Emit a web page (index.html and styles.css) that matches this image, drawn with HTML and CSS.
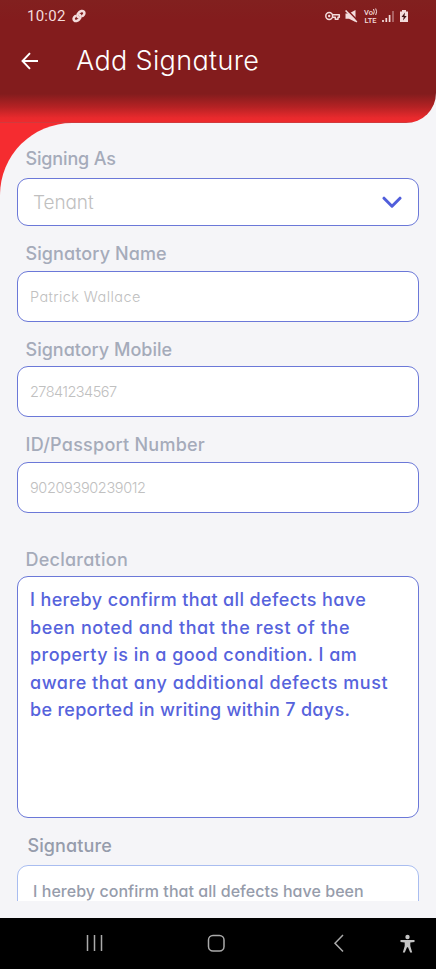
FILE: index.html
```html
<!DOCTYPE html>
<html lang="en">
<head>
<meta charset="utf-8">
<title>Add Signature</title>
<link rel="stylesheet" href="styles.css">
</head>
<body>
<div class="screen">
  <header class="header">
    <div class="status">
      <span class="clock">10:02</span>
      <svg class="link" width="14" height="14" viewBox="0 0 14 14"><g fill="none" stroke="#f3dcdc" stroke-width="2.5" stroke-linecap="round"><path d="M6.2 8.2C4.700 6.700 5.300 5.200 6.800 3.600C8.300 1.800 10.600 1.400 11.800 2.700C13 4 12.200 6 10.700 6.900"/><path d="M7.800 5.800C9.300 7.300 8.700 8.800 7.200 10.400C5.700 12.200 3.400 12.600 2.200 11.300C1 10 1.800 8 3.300 7.100"/></g></svg>
      <svg class="tray" width="86" height="18" viewBox="0 -1 86 18">
        <g fill="none" stroke="#f3dcdc" stroke-width="1.500"><circle cx="5.200" cy="8" r="3.400"/><path d="M8.500 6.700H15.300V9.300H14V11.300H11.300V9.300H8.500" stroke-linejoin="round"/></g><circle cx="5.200" cy="8" r="1.200" fill="#f3dcdc"/>
        <path d="M21.500 5.500H25L31.500 2V14L25 10.800H21.500Z" fill="#f3dcdc"/><path d="M22.800 1.600L34 13" stroke="#831c1d" stroke-width="1.600"/><path d="M21.600 2.500L32.800 14" stroke="#f3dcdc" stroke-width="1.600"/>
        <text x="40" y="6.500" class="tiny" textLength="9" lengthAdjust="spacingAndGlyphs">Vo</text><text x="40.500" y="15" class="tiny" textLength="12" lengthAdjust="spacingAndGlyphs">LTE</text>
        <path d="M49.500 1Q51 3.700 49.500 6.500M51.700 0.500Q53.500 3.700 51.700 7" fill="none" stroke="#f3dcdc"/>
        <path d="M59 12V14M62.300 10V14M65.600 7V14" stroke="#f3dcdc" stroke-width="1.700"/><path d="M69 3V14" stroke="#b9797a" stroke-width="1.500"/>
        <path d="M78 2H82V3.500H84V14H76V3.500H78Z" fill="#f3dcdc"/><path d="M81 4.500L77.500 9H79.700L79 12.500L82.700 8H80.500Z" fill="#401314"/>
      </svg>
    </div>
    <div class="titlebar">
      <svg width="18" height="18" viewBox="0 0 18 18" fill="none" stroke="#fff" stroke-width="1.900"><path d="M17 9H1.500M9 1.200L1.500 9L9 16.800"/></svg>
      <h1>Add Signature</h1>
    </div>
  </header>
  <div class="sheet-back">
    <main class="sheet">
      <div class="label as-label">Signing As</div>
      <div class="field select"><span>Tenant</span><svg width="20" height="13" viewBox="0 0 20 13" fill="none" stroke="#505edb" stroke-width="3" stroke-linecap="round" stroke-linejoin="round"><path d="M2 2.200L10 10.200L18 2.200"/></svg></div>
      <div class="label name-label">Signatory Name</div>
      <div class="field name">Patrick Wallace</div>
      <div class="label">Signatory Mobile</div>
      <div class="field mobile">27841234567</div>
      <div class="label id-label">ID/Passport Number</div>
      <div class="field id-number">90209390239012</div>
      <div class="label decl-label">Declaration</div>
      <div class="area">
        <div class="line-1">I hereby confirm that all defects have</div>
        <div class="line-2">been noted and that the rest of the</div>
        <div class="line-3">property is in a good condition. I am</div>
        <div class="line-4">aware that any additional defects must</div>
        <div class="line-5">be reported in writing within 7 days.</div>
      </div>
      <div class="label sig-label">Signature</div>
      <div class="clip"><div class="sig">I hereby confirm that all defects have been</div></div>
    </main>
  </div>
  <nav class="nav">
    <svg width="436" height="51" viewBox="0 0 436 51" fill="none" stroke="#aaa" stroke-width="1.500">
      <path d="M87.500 17V33M94.500 17V33M101.500 17V33"/><rect x="208.500" y="17.500" width="15.500" height="15.500" rx="4.500"/><path d="M343 17L335 25.200L343 33.500"/>
      <g fill="#c4c4c4" stroke="none"><circle cx="407.500" cy="19" r="2.200"/><path d="M400.500 22H414.500V23.900L410.300 24.500V28L412.200 34.500H410.200L408 29.300H407L404.800 34.500H402.800L404.700 28V24.500L400.500 23.900Z"/></g>
    </svg>
  </nav>
</div>
</body>
</html>
```

FILE: styles.css
```css
* { box-sizing: border-box; }
body { margin: 0; background: #f5f5f8; font-family: Inter, "Open Sans", sans-serif; font-feature-settings: "cv11"; }
.screen { width: 436px; height: 969px; display: flex; flex-direction: column; overflow: hidden; }
.header { height: 123px; flex: none; border-bottom-right-radius: 30px; background: linear-gradient(#82201f 0, #831c1d 20px, #831c1d 94px, #b52224 107px, #e92a2d 118px, #ee2a2d 122px, #b54a4d 123px); }
.status { height: 32px; display: flex; align-items: center; padding-left: 27px; }
.clock { font: 400 15px Roboto, sans-serif; letter-spacing: 0.25px; color: #f3dcdc; }
.link { margin-left: 6px; }
.tray { margin-left: auto; margin-right: 26px; }
.tiny { font: 500 7px Roboto, sans-serif; fill: #f3dcdc; }
.titlebar { display: flex; align-items: center; height: 58px; padding-left: 21px; }
h1 { margin: 0 0 0 37px; font-size: 27px; line-height: 34px; font-weight: 300; letter-spacing: 0.35px; color: #fff; }
.sheet-back { height: 795px; flex: none; background: linear-gradient(90deg, #f52c30 72px, #f5f5f8 72px); }
.sheet { height: 795px; padding: 25px 17px 0; background: #f5f5f8; border-top-left-radius: 72px; }
.label { height: 22px; line-height: 22px; margin: 17px 0 5.500px 8.500px; font-size: 18px; font-weight: 500; color: #a5abba; white-space: nowrap; }
.as-label { margin-top: 0; margin-bottom: 8px; letter-spacing: -0.15px; }
.name-label { letter-spacing: 0.1px; }
.id-label { letter-spacing: 0.25px; }
.field { height: 51px; border: 1px solid #6b78d8; border-radius: 11px; background: #fff; display: flex; align-items: center; padding-left: 12px; font-size: 14.500px; font-weight: 300; color: #c0c0c0; }
.select { height: 48px; padding: 0 16px 0 15px; justify-content: space-between; font-size: 19px; letter-spacing: -0.1px; }
.name { letter-spacing: 0.4px; }
.mobile { letter-spacing: -0.55px; }
.id-number { letter-spacing: -0.36px; }
.decl-label { margin-top: 36px; margin-bottom: 5.500px; letter-spacing: 0.25px; }
.area { height: 242px; border: 1px solid #6b78d8; border-radius: 11px; background: #fff; padding: 9px 12px; font-size: 18px; font-weight: 500; line-height: 27.500px; color: #5663dc; white-space: nowrap; }
.line-1 { letter-spacing: 0.38px; }
.line-2 { letter-spacing: 0.6px; }
.line-3 { letter-spacing: 0.46px; }
.line-4 { letter-spacing: 0.54px; }
.line-5 { letter-spacing: 0.3px; }
.sig-label { margin: 17px 0 8px 10.500px; letter-spacing: 0.1px; color: #969cab; }
.clip { height: 36px; overflow: hidden; }
.sig { height: 80px; border: 1px solid #a9bdf0; border-radius: 11px; background: #fff; padding: 14px 15px; font-size: 16px; line-height: 22px; font-weight: 500; letter-spacing: 0.05px; color: #969cab; white-space: nowrap; }
.nav { height: 51px; background: #000; }
.nav svg { display: block; }
```
